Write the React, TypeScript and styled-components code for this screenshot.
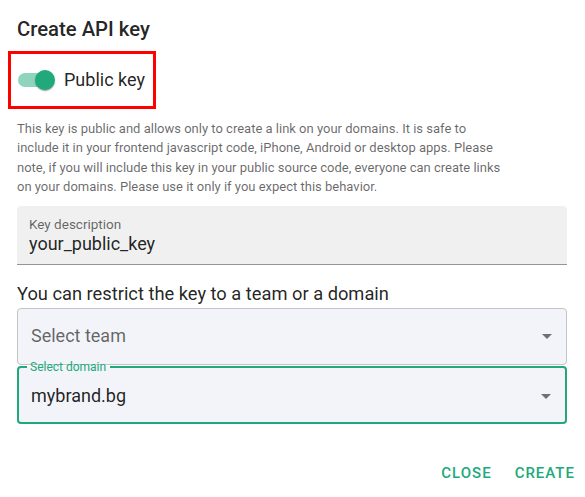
import styled, { createGlobalStyle } from "styled-components";

const GREEN = "#20a97a";

const GlobalStyle = createGlobalStyle`
  body {
    margin: 0;
    background: #fff;
    font-family: Roboto, "Liberation Sans", Arial, sans-serif;
  }
`;

const Dialog = styled.div`
  width: 585px;
  box-sizing: border-box;
  padding: 13px 18px 0 17px;
  display: flex;
  flex-direction: column;
`;

const Title = styled.h2`
  margin: 0;
  font-size: 20.3px;
  font-weight: 500;
  line-height: 32px;
  color: rgba(0, 0, 0, 0.87);
`;

const Highlight = styled.div`
  align-self: flex-start;
  margin: 6px 0 0 -9px;
  border: 3px solid #ff0000;
  padding: 16px 8px 16px 7px;
  display: flex;
  align-items: center;
`;

const Switch = styled.span`
  position: relative;
  width: 37px;
  height: 20px;
  margin-right: 9px;
  flex-shrink: 0;
`;

const Track = styled.span`
  position: absolute;
  left: 0;
  top: 3px;
  width: 34px;
  height: 14px;
  border-radius: 7px;
  background: ${GREEN};
  opacity: 0.5;
`;

const Thumb = styled.span`
  position: absolute;
  right: 0;
  top: 0;
  width: 20px;
  height: 20px;
  border-radius: 50%;
  background: ${GREEN};
  box-shadow: 0 2px 1px -1px rgba(0, 0, 0, 0.2), 0 1px 1px 0 rgba(0, 0, 0, 0.14),
    0 1px 3px 0 rgba(0, 0, 0, 0.12);
`;

const SwitchLabel = styled.span`
  font-size: 18px;
  line-height: 20px;
  color: rgba(0, 0, 0, 0.87);
`;

const Help = styled.p`
  margin: 10px 0 0;
  max-width: 485px;
  font-size: 13px;
  line-height: 19.4px;
  color: rgba(0, 0, 0, 0.6);
`;

const FilledField = styled.div`
  margin-top: 9px;
  height: 59px;
  box-sizing: border-box;
  padding: 10px 12px 0;
  background: #f0f0f0;
  border-radius: 4px 4px 0 0;
  border-bottom: 1px solid #949494;
`;

const SmallLabel = styled.div`
  font-size: 13.5px;
  line-height: 16px;
  color: rgba(0, 0, 0, 0.6);
`;

const Value = styled.div<{ $muted?: boolean }>`
  font-size: 18px;
  line-height: 24px;
  color: ${(p) => (p.$muted ? "rgba(0, 0, 0, 0.6)" : "rgba(0, 0, 0, 0.87)")};
`;

const Subheading = styled.div`
  margin: 17px 0 2px;
  font-size: 18.3px;
  line-height: 24px;
  color: rgba(0, 0, 0, 0.87);
`;

const SelectBox = styled.div`
  height: 57px;
  box-sizing: border-box;
  border: 1px solid #c4c4c4;
  border-radius: 4px;
  background: #f3f4f9;
  padding: 0 7px 0 13px;
  display: flex;
  align-items: center;
  justify-content: space-between;
`;

const FocusedSelect = styled.fieldset`
  margin: -5px 0 0;
  min-width: 0;
  border: 2px solid ${GREEN};
  border-radius: 4px;
  background: #f3f4f9;
  padding: 10px 7px 14px 12px;
  display: flex;
  align-items: center;
  justify-content: space-between;
`;

const Legend = styled.legend`
  margin-left: -4px;
  padding: 0 4px 0 3px;
  font-size: 12px;
  line-height: 14px;
  color: ${GREEN};
`;

const Arrow = styled.svg`
  width: 24px;
  height: 24px;
  fill: rgba(0, 0, 0, 0.54);
  flex-shrink: 0;
`;

const Actions = styled.div`
  margin: 31px -16px 0 0;
  display: flex;
  justify-content: flex-end;
  gap: 7px;
`;

const TextButton = styled.button`
  border: 0;
  background: none;
  padding: 6px 8px;
  font-family: inherit;
  font-size: 15px;
  font-weight: 500;
  line-height: 24px;
  letter-spacing: 1px;
  text-transform: uppercase;
  color: ${GREEN};
  cursor: pointer;
`;

function DropArrow() {
  return (
    <Arrow viewBox="0 0 24 24">
      <path d="M7 10l5 5 5-5z" />
    </Arrow>
  );
}

export default function App() {
  return (
    <>
      <GlobalStyle />
      <Dialog>
        <Title>Create API key</Title>
        <Highlight>
          <Switch>
            <Track />
            <Thumb />
          </Switch>
          <SwitchLabel>Public key</SwitchLabel>
        </Highlight>
        <Help>
          This key is public and allows only to create a link on your domains. It is safe to
          include it in your frontend javascript code, iPhone, Android or desktop apps. Please
          note, if you will include this key in your public source code, everyone can create links
          on your domains. Please use it only if you expect this behavior.
        </Help>
        <FilledField>
          <SmallLabel>Key description</SmallLabel>
          <Value>your_public_key</Value>
        </FilledField>
        <Subheading>You can restrict the key to a team or a domain</Subheading>
        <SelectBox>
          <Value $muted>Select team</Value>
          <DropArrow />
        </SelectBox>
        <FocusedSelect>
          <Legend>Select domain</Legend>
          <Value>mybrand.bg</Value>
          <DropArrow />
        </FocusedSelect>
        <Actions>
          <TextButton>Close</TextButton>
          <TextButton>Create</TextButton>
        </Actions>
      </Dialog>
    </>
  );
}
